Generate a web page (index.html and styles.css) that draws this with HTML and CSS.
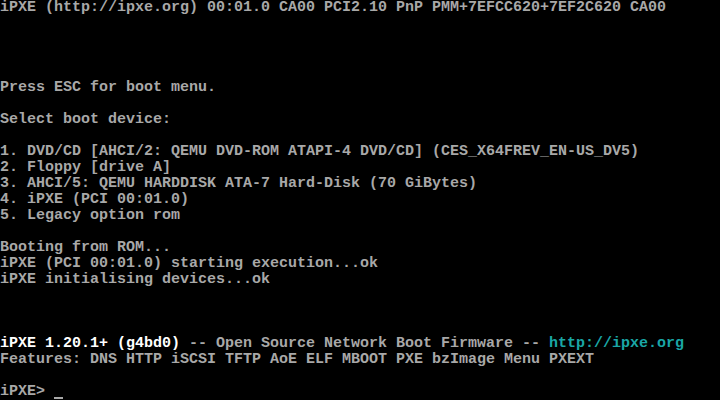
FILE: index.html
```html
<!DOCTYPE html>
<html>
<head>
<meta charset="utf-8">
<link rel="stylesheet" href="styles.css">
</head>
<body>
<pre class="screen">iPXE (http://ipxe.org) 00:01.0 CA00 PCI2.10 PnP PMM+7EFCC620+7EF2C620 CA00




Press ESC for boot menu.

Select boot device:

1. DVD/CD [AHCI/2: QEMU DVD-ROM ATAPI-4 DVD/CD] (CES_X64FREV_EN-US_DV5)
2. Floppy [drive A]
3. AHCI/5: QEMU HARDDISK ATA-7 Hard-Disk (70 GiBytes)
4. iPXE (PCI 00:01.0)
5. Legacy option rom

Booting from ROM...
iPXE (PCI 00:01.0) starting execution...ok
iPXE initialising devices...ok



<span class="bright">iPXE 1.20.1+ (g4bd0)</span> -- Open Source Network Boot Firmware -- <span class="cyan">http://ipxe.org</span>
Features: DNS HTTP iSCSI TFTP AoE ELF MBOOT PXE bzImage Menu PXEXT

iPXE&gt; <span class="cursor"> </span></pre>
</body>
</html>
```

FILE: styles.css
```css
html, body {
  margin: 0;
  padding: 0;
  background: #000;
}
body {
  width: 720px;
  height: 400px;
  overflow: hidden;
}
.screen {
  margin: 0;
  padding: 0;
  font-family: "Liberation Mono", "DejaVu Sans Mono", monospace;
  font-size: 15px;
  line-height: 16px;
  color: #a8a8a8;
  white-space: pre;
  font-weight: bold;
}
.bright {
  color: #ffffff;
}
.cyan {
  color: #1aa6a6;
}
.cursor {
  display: inline-block;
  position: relative;
  width: 9px;
  height: 16px;
  vertical-align: top;
}
.cursor::after {
  content: "";
  position: absolute;
  left: 0;
  right: 0;
  bottom: 1px;
  height: 2px;
  background: #a8a8a8;
}
```
